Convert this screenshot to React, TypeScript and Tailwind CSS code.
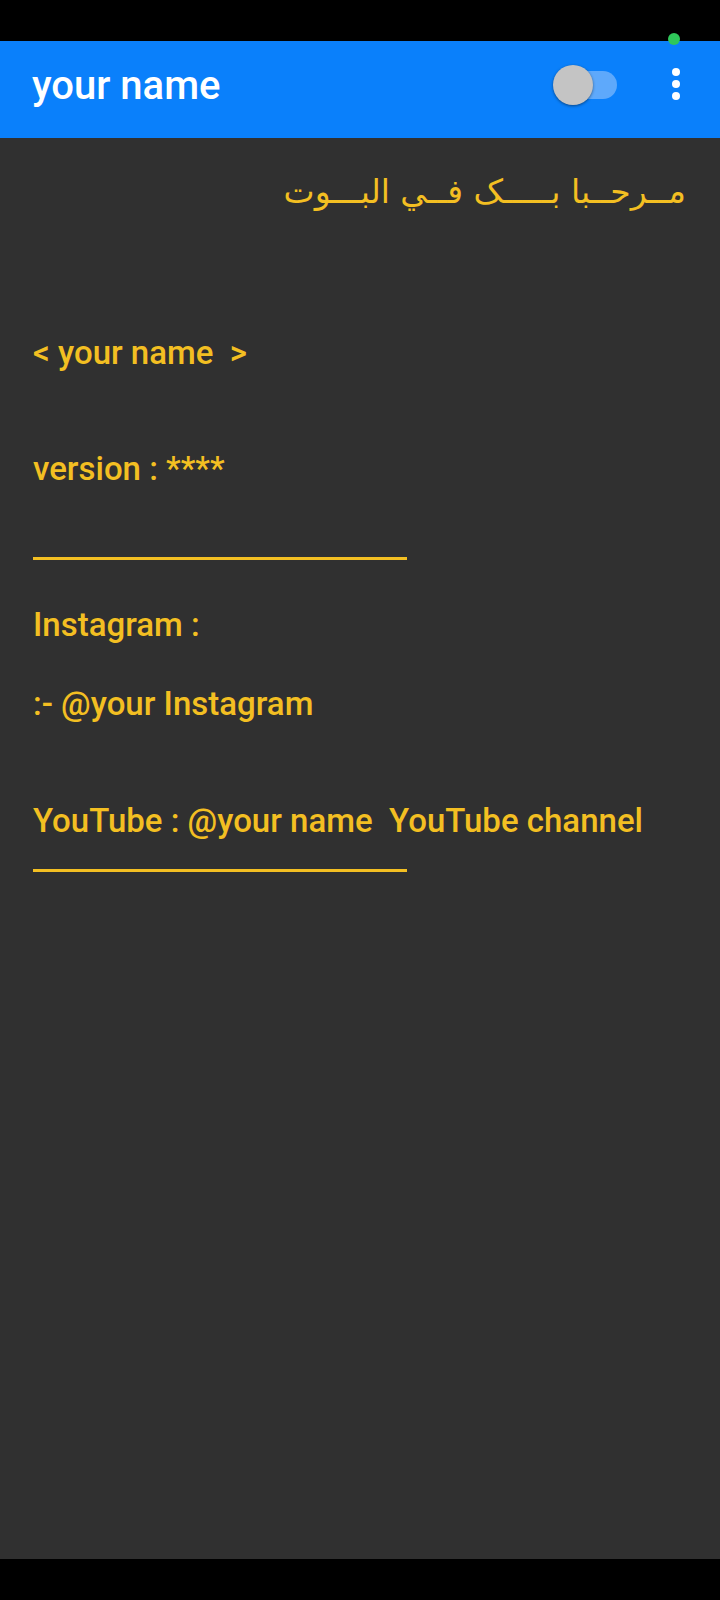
import React from 'react'

const TEXT = 'text-[33px] leading-[40px] h-[40px] font-medium text-[#f3bf22] whitespace-pre'

export default function App() {
  return (
    <div className="relative w-[720px] h-[1600px] bg-black flex flex-col font-['Roboto',sans-serif]">
      {/* status bar */}
      <div className="h-[41px] bg-black shrink-0" />

      {/* app bar */}
      <div className="h-[97px] shrink-0 bg-[#0a80fb] flex items-center pl-[32px] pr-[40px] pb-[10px]">
        <div className="text-[40px] leading-[48px] font-medium text-white flex-1 mt-[2px]">your name</div>
        <div className="relative w-[64px] h-[40px] flex items-center mr-[55px]">
          <div className="absolute right-0 w-[60px] h-[28px] rounded-full bg-[#5ea9fb]" />
          <div className="absolute left-0 w-[40px] h-[40px] rounded-full bg-[#c4c4c4] shadow-[0_1px_3px_rgba(0,0,0,0.45)]" />
        </div>
        <div className="flex flex-col gap-[4px] items-center -mt-[2px]">
          <span className="w-[8px] h-[8px] rounded-full bg-white" />
          <span className="w-[8px] h-[8px] rounded-full bg-white" />
          <span className="w-[8px] h-[8px] rounded-full bg-white" />
        </div>
      </div>

      {/* content */}
      <div className="flex-1 bg-[#303030] flex flex-col pl-[33px] pr-[34px]">
        <div
          dir="rtl"
          className="mt-[34px] h-[40px] text-[33px] leading-[40px] text-[#f3bf22] font-['DejaVu_Sans',sans-serif] text-right"
        >
          مــرحــبا بـــــک فــي البـــوت
        </div>
        <div className={`mt-[121px] ${TEXT}`}>{'< your name  >'}</div>
        <div className={`mt-[76px] ${TEXT}`}>version : ****</div>
        <div className="mt-[68px] w-[374px] h-[3px] bg-[#f3bf22]" />
        <div className={`mt-[45px] ${TEXT}`}>Instagram :</div>
        <div className={`mt-[39px] ${TEXT}`}>:- @your Instagram</div>
        <div className={`mt-[77px] ${TEXT}`}>YouTube : @your name  YouTube channel</div>
        <div className="mt-[28px] w-[374px] h-[3px] bg-[#f3bf22]" />
      </div>

      {/* nav bar */}
      <div className="h-[41px] bg-black shrink-0" />

      {/* privacy indicator */}
      <span className="absolute left-[668px] top-[33px] w-[12px] h-[12px] rounded-full bg-[#2fc75a]" />
    </div>
  )
}
